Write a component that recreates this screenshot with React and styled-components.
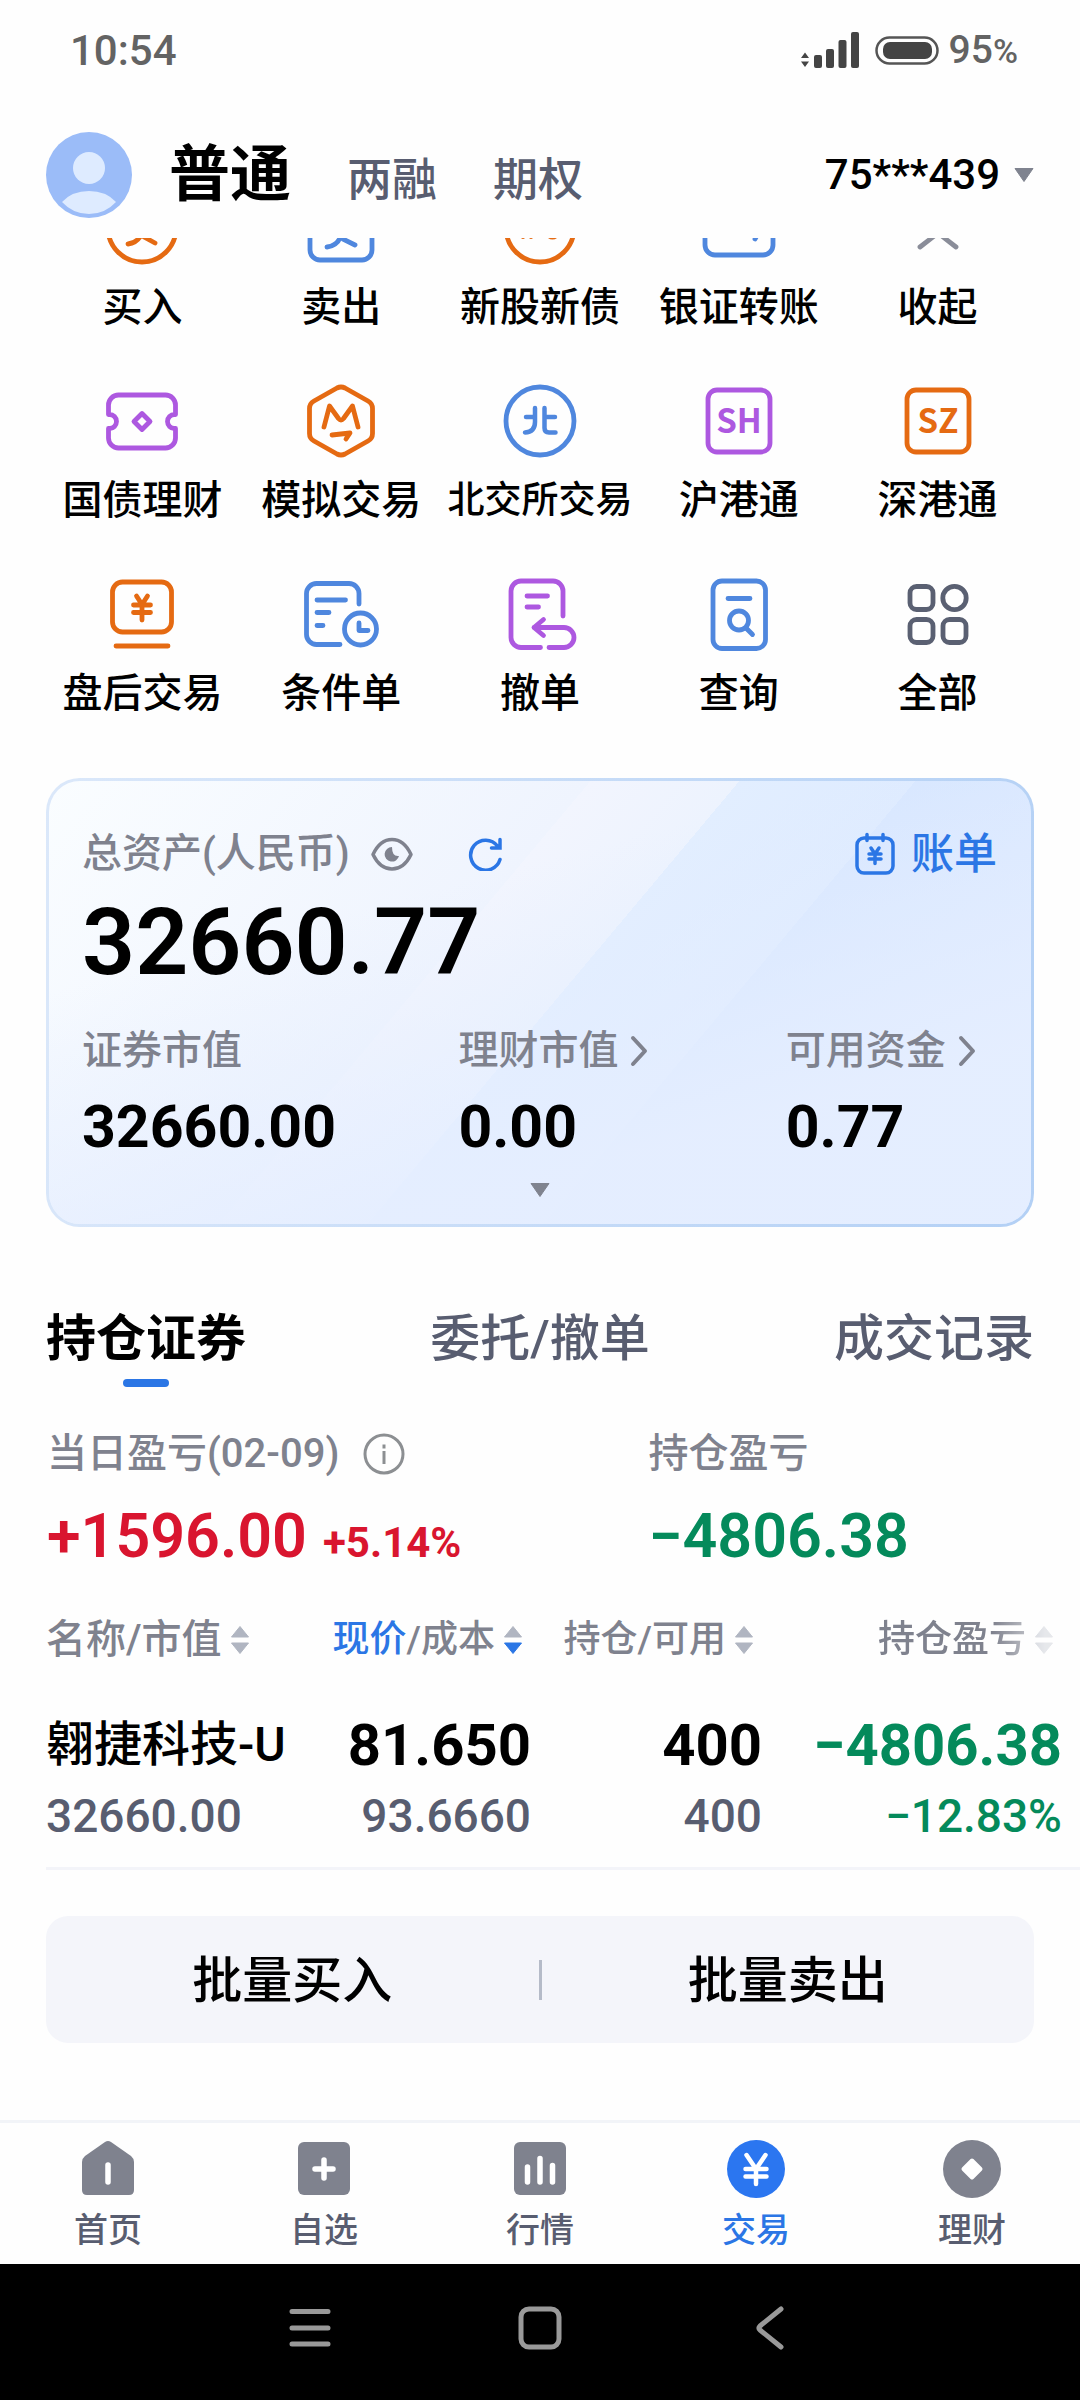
import styled, { createGlobalStyle } from "styled-components";

const colors = {
  ink: "#000",
  slate: "#585d70",
  muted: "#7f828e",
  blue: "#2b76e5",
  up: "#d9152f",
  down: "#048a5b",
  iconOrange: "#e56a12",
  iconBlue: "#4f87de",
  iconPurple: "#ad58e0",
};

const GlobalStyle = createGlobalStyle`
  * {
    box-sizing: border-box;
  }
  body {
    margin: 0;
    background: #fefefe;
    color: ${colors.ink};
    font-family: Roboto, "Noto Sans CJK SC", sans-serif;
    font-weight: 500;
  }
  button {
    margin: 0;
    padding: 0;
    border: 0;
    background: none;
    color: inherit;
    font: inherit;
    cursor: pointer;
  }
  a {
    color: inherit;
    text-decoration: none;
  }
  svg {
    display: block;
    flex-shrink: 0;
  }
`;

const Page = styled.div`
  display: flex;
  flex-direction: column;
  min-height: 100vh;
  white-space: nowrap;
`;

/* status bar */

const StatusBar = styled.div`
  display: flex;
  align-items: center;
  justify-content: space-between;
  height: 100px;
  padding: 0 62px 0 70px;
  color: #636363;
  font-size: 42px;
`;

const StatusRight = styled.div`
  display: flex;
  align-items: center;
`;

const BatteryText = styled.span`
  margin-left: 9px;
  font-size: 39px;
  line-height: 48px;
`;

const PercentSign = styled.span`
  font-size: 34px;
`;

/* account header */

const Header = styled.header`
  display: flex;
  align-items: center;
  padding: 32px 46px 20px;
`;

const AccountTabs = styled.nav`
  display: flex;
  align-items: baseline;
  flex: 1;
  gap: 56px;
  padding: 6px 0 0 37px;
`;

const AccountTab = styled.button`
  color: ${(props) => (props.$active ? colors.ink : colors.slate)};
  font-size: ${(props) => (props.$active ? 61 : 45)}px;
  font-weight: ${(props) => (props.$active ? 700 : 500)};
  line-height: 72px;
`;

const AccountSwitch = styled.button`
  display: flex;
  align-items: center;
  gap: 14px;
  font-size: 42px;
  line-height: 48px;
`;

/* shortcut grid, scrolled partly under the header */

const Scroller = styled.main`
  flex: 1;
  overflow: hidden;
`;

const Shortcuts = styled.div`
  display: grid;
  grid-template-columns: repeat(5, 1fr);
  row-gap: 43px;
  margin-top: -52px;
  padding: 0 43px;
`;

const Shortcut = styled.button`
  display: flex;
  flex-direction: column;
  align-items: center;
  gap: 10px;
  font-size: ${(props) => (props.$compact ? 37 : 40)}px;
  line-height: 56px;
`;

/* asset card */

const Card = styled.section`
  margin: 56px 46px 0;
  padding: 43px 34px 27px 33px;
  border: 3px solid transparent;
  border-radius: 34px;
  background: linear-gradient(345deg, rgba(229, 238, 255, 0.95) 25%, rgba(229, 238, 255, 0) 70%) padding-box,
    linear-gradient(
        130deg,
        #fafdff 0%,
        #eff4fe 40%,
        #f2f5fe 40%,
        #edf3fe 51%,
        #e2eeff 51%,
        #deebff 64%,
        #d8e7ff 64%,
        #deeaff 100%
      )
      padding-box,
    linear-gradient(100deg, #dbe8fa 0%, #b3d0f5 100%) border-box;
`;

const CardTop = styled.div`
  display: flex;
  align-items: center;
  height: 60px;
  color: ${colors.muted};
  font-size: 40px;
  line-height: 60px;
`;

const EyeButton = styled.button`
  margin: 0 55px 0 21px;
`;

const BillLink = styled.a`
  display: flex;
  align-items: center;
  gap: 16px;
  margin-left: auto;
  color: ${colors.blue};
  font-size: 43px;
  line-height: 60px;
`;

const TotalAmount = styled.div`
  margin: 11px 0 36px;
  font-size: 93px;
  font-weight: 600;
  line-height: 96px;
`;

const Balances = styled.div`
  display: grid;
  grid-template-columns: 376fr 327fr 211fr;
`;

const BalanceLabel = styled.div`
  display: flex;
  align-items: center;
  gap: 12px;
  color: ${colors.muted};
  font-size: 40px;
  line-height: 48px;
`;

const BalanceValue = styled.div`
  margin-top: 20px;
  font-size: 59px;
  font-weight: 700;
  line-height: 64px;
`;

const Expand = styled.button`
  display: block;
  margin: 24px auto 0;
`;

/* holdings */

const Tabs = styled.nav`
  display: flex;
  justify-content: space-between;
  padding: 80px 46px 0;
`;

const Tab = styled.button`
  display: flex;
  flex-direction: column;
  align-items: center;
  color: ${(props) => (props.$active ? colors.ink : colors.slate)};
  font-size: 50px;
  font-weight: ${(props) => (props.$active ? 700 : 500)};
  line-height: 64px;

  &::after {
    content: "";
    width: 46px;
    height: 8px;
    margin-top: 8px;
    border-radius: 4px;
    background: ${(props) => (props.$active ? colors.blue : "transparent")};
  }
`;

const Profits = styled.div`
  display: grid;
  grid-template-columns: 602fr 386fr;
  padding: 43px 46px 0 47px;
`;

const ProfitLabel = styled.div`
  display: flex;
  align-items: center;
  gap: 24px;
  color: ${colors.muted};
  font-size: 40px;
  line-height: 48px;
`;

const ProfitValue = styled.div`
  margin-top: 22px;
  color: ${(props) => (props.$up ? colors.up : colors.down)};
  font-size: 61px;
  font-weight: 600;
  line-height: 72px;
`;

const ProfitRate = styled.span`
  margin-left: 16px;
  font-size: 42px;
  font-weight: 700;
  line-height: 42px;
`;

const Holdings = styled.table`
  width: calc(100% - 46px);
  margin: 40px 0 0 46px;
  border-collapse: collapse;
  table-layout: fixed;
`;

const HeadCell = styled.th`
  width: ${(props) => props.$width || "auto"};
  padding: ${(props) => (props.$first ? "0" : "0 8px 0 0")};
  color: ${colors.muted};
  font-size: ${(props) => (props.$first ? 40 : 37)}px;
  font-weight: 500;
  line-height: 56px;
  text-align: ${(props) => (props.$first ? "left" : "right")};

  &:last-child {
    padding-right: 26px;
  }
`;

const SortButton = styled.button`
  display: inline-flex;
  align-items: center;
  gap: 8px;
  vertical-align: top;
  mask-image: ${(props) =>
    props.$fading ? "linear-gradient(to right, #000 65%, rgba(0, 0, 0, 0.3) 95%)" : "none"};
`;

const SortedBy = styled.span`
  color: ${colors.blue};
`;

const Cell = styled.td`
  padding: 45px 0 25px;
  border-bottom: 3px solid #f3f4f9;
  color: ${(props) => (props.$down ? colors.down : colors.ink)};
  text-align: ${(props) => (props.$first ? "left" : "right")};

  &:last-child {
    padding-right: 18px;
  }
`;

const CellMain = styled.div`
  font-size: ${(props) => (props.$name ? 48 : 58)}px;
  font-weight: ${(props) => (props.$name ? 500 : 700)};
  line-height: 64px;
`;

const CellSub = styled.div`
  margin-top: 13px;
  color: ${(props) => (props.$down ? colors.down : colors.slate)};
  font-size: 46px;
  line-height: 52px;
`;

const BatchActions = styled.div`
  display: flex;
  align-items: center;
  margin: 46px 46px 77px;
  border-radius: 22px;
  background: #f4f5fa;
`;

const BatchButton = styled.button`
  flex: 1;
  padding-top: 3px;
  font-size: 50px;
  line-height: 124px;
`;

const Divider = styled.span`
  width: 3px;
  height: 40px;
  background: #b5bbc8;
`;

/* bottom bars */

const BottomNav = styled.nav`
  display: grid;
  grid-template-columns: repeat(5, 1fr);
  padding: 16px 0 14px;
  border-top: 3px solid #f2f4f8;
`;

const NavItem = styled.a`
  display: flex;
  flex-direction: column;
  align-items: center;
  gap: 11px;
  color: ${(props) => (props.$active ? colors.blue : colors.slate)};
  font-size: 34px;
  line-height: 40px;
`;

const SystemBar = styled.div`
  display: flex;
  align-items: center;
  justify-content: center;
  gap: 186px;
  height: 136px;
  padding-bottom: 8px;
  background: #000;
`;

const SystemButton = styled.button`
  color: #999;
`;

const ShortcutIcon = ({ color, children }) => (
  <svg
    width="84"
    height="84"
    viewBox="0 0 84 84"
    fill="none"
    stroke={color}
    strokeWidth="4.800"
    strokeLinecap="round"
    strokeLinejoin="round"
    aria-hidden="true"
  >
    {children}
  </svg>
);

const MarketCode = ({ color, children }) => (
  <>
    <rect x="11" y="11" width="62" height="62" rx="9" />
    <text
      x="42"
      y="54"
      fill={color}
      stroke="none"
      fontFamily="Noto Sans CJK SC, sans-serif"
      fontSize="33"
      fontWeight="700"
      textAnchor="middle"
    >
      {children}
    </text>
  </>
);

const shortcuts = [
  {
    label: "买入",
    color: colors.iconOrange,
    icon: (
      <>
        <circle cx="42" cy="42" r="34" />
        <path d="M28 58q9-1 13-9M44 51l11 6" />
      </>
    ),
  },
  {
    label: "卖出",
    color: colors.iconBlue,
    icon: (
      <>
        <rect x="11" y="10" width="62" height="64" rx="10" />
        <path d="M28 61q10-1 14-11M44 53l12 6" />
      </>
    ),
  },
  {
    label: "新股新债",
    color: colors.iconOrange,
    icon: (
      <>
        <circle cx="42" cy="42" r="34" />
        <path d="M25 34v17M33 51V34h5a5 5 0 0 1 0 10h-5" strokeWidth="4" />
        <rect x="49" y="34" width="11" height="17.500" rx="5.500" strokeWidth="4" />
      </>
    ),
  },
  {
    label: "银证转账",
    color: colors.iconBlue,
    icon: (
      <>
        <rect x="8" y="14" width="68" height="55" rx="10" />
        <path d="M24 32h36M24 46h38l-4 7" />
      </>
    ),
  },
  { label: "收起", color: "#8a8d99", icon: <path d="M24 61l18-14 18 14" /> },
  {
    label: "国债理财",
    color: colors.iconPurple,
    icon: (
      <>
        <path d="M8.500 35.500V26a10 10 0 0 1 10-10h47a10 10 0 0 1 10 10v9.500h-1a7 7 0 0 0 0 14h1V59a10 10 0 0 1-10 10h-47a10 10 0 0 1-10-10v-9.500h1a7 7 0 0 0 0-14z" />
        <path d="M42 34.500l8 8-8 8-8-8z" />
      </>
    ),
  },
  {
    label: "模拟交易",
    color: colors.iconOrange,
    icon: (
      <>
        <path d="M38 9q4-2 8 0l23 13q4.500 2.500 4.500 7.500v25q0 5-4.500 7.500L46 75q-4 2-8 0L15 62q-4.500-2.500-4.500-7.500v-25q0-5 4.500-7.500z" />
        <path d="M25 48l5.500-21 9 12.500q2.500 3 5 0l9-12.500 5.500 21M33 56l18-2-4 6" />
      </>
    ),
  },
  {
    label: "北交所交易",
    color: colors.iconBlue,
    compact: true,
    icon: (
      <>
        <circle cx="42" cy="42" r="34" />
        <path d="M37 29v14q0 10-10 10.500M28 38h9M46.500 29v20q0 4.500 4.500 4.500h6.500M47 38h10" strokeWidth="4.500" />
      </>
    ),
  },
  {
    label: "沪港通",
    color: colors.iconPurple,
    icon: <MarketCode color={colors.iconPurple}>SH</MarketCode>,
  },
  {
    label: "深港通",
    color: colors.iconOrange,
    icon: <MarketCode color={colors.iconOrange}>SZ</MarketCode>,
  },
  {
    label: "盘后交易",
    color: colors.iconOrange,
    icon: (
      <>
        <rect x="12.500" y="10" width="59" height="50" rx="10" />
        <path d="M36.500 24l5.500 8.500 5.500-8.500M42 33v15M33.500 33h17M33.500 40.500h17M16 74h52" />
      </>
    ),
  },
  {
    label: "条件单",
    color: colors.iconBlue,
    icon: (
      <>
        <path d="M60 32V21.500a10 10 0 0 0-10-10H17.500a10 10 0 0 0-10 10v41a10 10 0 0 0 10 10H41M18 28h28.500M18 40.500h12M18 53.500h6" />
        <circle cx="61.500" cy="57" r="16" />
        <path d="M60 51v7.500h9" />
      </>
    ),
  },
  {
    label: "撤单",
    color: colors.iconPurple,
    icon: (
      <>
        <path d="M65 44V19a10 10 0 0 0-10-10H23a10 10 0 0 0-10 10v46.500a10 10 0 0 0 10 10h19.500M29 24h20.500M29 35h11.500" />
        <path d="M45.500 47.500l-9.500 8 9.500 8M36 55.500h30a10 10 0 0 1 0 20H51" />
      </>
    ),
  },
  {
    label: "查询",
    color: colors.iconBlue,
    icon: (
      <>
        <rect x="16" y="9" width="52.500" height="67.500" rx="9" />
        <path d="M31 26.500h22M49 56l6.500 6.500" />
        <circle cx="42" cy="48.500" r="9.500" />
      </>
    ),
  },
  {
    label: "全部",
    color: "#5a6072",
    icon: (
      <>
        <rect x="14" y="14.500" width="23" height="23" rx="6.500" />
        <circle cx="58.500" cy="26" r="11.700" />
        <rect x="14" y="47.500" width="23" height="23" rx="6.500" />
        <rect x="47" y="47.500" width="23" height="23" rx="6.500" />
      </>
    ),
  },
];

const navItems = [
  {
    label: "首页",
    icon: (
      <>
        <path d="M27 3q3-2 6 0l20 14q3 2.500 3 6v28q0 5-5 5H9q-5 0-5-5V23q0-3.500 3-6z" fill="#7f828e" stroke="none" />
        <path d="M30 26v17" />
      </>
    ),
  },
  {
    label: "自选",
    icon: (
      <>
        <rect x="4" y="3" width="52" height="53" rx="6" fill="#7f828e" stroke="none" />
        <path d="M30 21v18M21 30h18" />
      </>
    ),
  },
  {
    label: "行情",
    icon: (
      <>
        <rect x="4" y="3" width="52" height="53" rx="6" fill="#7f828e" stroke="none" />
        <path d="M17.500 28v15M30 19.500v23.500M42.500 26.500v16.500" />
      </>
    ),
  },
  {
    label: "交易",
    active: true,
    icon: (
      <>
        <circle cx="30" cy="30" r="29" fill="#2b76f0" stroke="none" />
        <path d="M20.500 16L30 30l9.500-14M30 30v15M19.500 30h21M19.500 37.500h21" strokeWidth="4.500" />
      </>
    ),
  },
  {
    label: "理财",
    icon: (
      <>
        <circle cx="30" cy="30" r="29" fill="#7f828e" stroke="none" />
        <path d="M30 21.500l8.500 8.500-8.500 8.500-8.500-8.500z" fill="#fff" strokeWidth="4" />
      </>
    ),
  },
];

const Chevron = () => (
  <svg width="18" height="32" viewBox="0 0 18 32" fill="none" stroke={colors.muted} strokeWidth="4" strokeLinecap="round" strokeLinejoin="round" aria-hidden="true">
    <path d="M3 3l12 13L3 29" />
  </svg>
);

const Caret = () => (
  <svg width="20" height="14" viewBox="0 0 20 14" aria-hidden="true">
    <path d="M1 .500h18L10 13.500z" fill="#7f838f" stroke="#7f838f" strokeLinejoin="round" />
  </svg>
);

const SortIcon = ({ descending }) => (
  <svg width="20" height="30" viewBox="0 0 20 30" strokeLinejoin="round" aria-hidden="true">
    <path d="M1.500 12L10 1.500l8.500 10.500z" fill="#b0b5c1" stroke="#b0b5c1" />
    <path d="M1.500 18L10 28.500l8.500-10.500z" fill={descending ? colors.blue : "#b0b5c1"} stroke={descending ? colors.blue : "#b0b5c1"} />
  </svg>
);

export default function App() {
  return (
    <Page>
      <GlobalStyle />
      <StatusBar>
        <span>10:54</span>
        <StatusRight>
          <svg width="140" height="40" viewBox="0 0 140 40" fill="#444" aria-hidden="true">
            <path d="M1 28l4-5.500 4 5.500zM1 31.500h8L5 37zM14 27a2 2 0 0 1 2-2h4a2 2 0 0 1 2 2v9a2 2 0 0 1-2 2h-4a2 2 0 0 1-2-2z" />
            <rect x="26" y="19" width="8" height="19" rx="2" />
            <rect x="38.500" y="10" width="8" height="28" rx="2" />
            <rect x="51" y="2" width="8" height="36" rx="2" />
            <rect x="76.500" y="7.500" width="61" height="26" rx="13" fill="none" stroke="#555" strokeWidth="2.500" />
            <rect x="83" y="12" width="49" height="17" rx="7" />
          </svg>
          <BatteryText>
            95<PercentSign>%</PercentSign>
          </BatteryText>
        </StatusRight>
      </StatusBar>

      <Header>
        <svg width="86" height="86" viewBox="0 0 86 86" role="img" aria-label="头像">
          <circle cx="43" cy="43" r="43" fill="#9bbcf8" />
          <circle cx="43" cy="36" r="16" fill="#deebff" />
          <path d="M16 70q10-11 27-11t27 11q-11 12-27 12T16 70z" fill="#deebff" />
        </svg>
        <AccountTabs>
          <AccountTab $active>普通</AccountTab>
          <AccountTab>两融</AccountTab>
          <AccountTab>期权</AccountTab>
        </AccountTabs>
        <AccountSwitch>
          75***439
          <Caret />
        </AccountSwitch>
      </Header>

      <Scroller>
        <Shortcuts>
          {shortcuts.map(({ label, color, icon, compact }) => (
            <Shortcut key={label} $compact={compact}>
              <ShortcutIcon color={color}>{icon}</ShortcutIcon>
              {label}
            </Shortcut>
          ))}
        </Shortcuts>

        <Card>
          <CardTop>
            总资产(人民币)
            <EyeButton aria-label="隐藏金额">
              <svg width="42" height="34" viewBox="0 0 42 34" fill="none" stroke={colors.muted} strokeWidth="3.500" strokeLinejoin="round">
                <path d="M2 17.500Q9 2.500 21 2.500t19 15Q33 32 21 32T2 17.500z" />
                <path d="M21 10a7.300 7.300 0 1 0 7 9q-7 1-7-9z" fill={colors.muted} stroke="none" />
              </svg>
            </EyeButton>
            <button aria-label="刷新">
              <svg width="34" height="34" viewBox="0 0 34 34" fill="none" stroke={colors.blue} strokeWidth="3.500" strokeLinecap="round">
                <path d="M32 22.500A15 15 0 1 1 29.500 9M32 2.500V11h-8.500" />
              </svg>
            </button>
            <BillLink href="#bill">
              <svg width="40" height="44" viewBox="0 0 40 44" fill="none" stroke={colors.blue} strokeWidth="3.500" strokeLinecap="round" strokeLinejoin="round" aria-hidden="true">
                <rect x="2" y="6" width="36" height="35" rx="7" />
                <path d="M12 2.500v6M28 2.500v6M16 16l4 6 4-6M20 22v9.500M14 22h12M14 27h12" />
              </svg>
              账单
            </BillLink>
          </CardTop>
          <TotalAmount>32660.77</TotalAmount>
          <Balances>
            <div>
              <BalanceLabel>证券市值</BalanceLabel>
              <BalanceValue>32660.00</BalanceValue>
            </div>
            <div>
              <BalanceLabel>
                理财市值
                <Chevron />
              </BalanceLabel>
              <BalanceValue>0.00</BalanceValue>
            </div>
            <div>
              <BalanceLabel>
                可用资金
                <Chevron />
              </BalanceLabel>
              <BalanceValue>0.77</BalanceValue>
            </div>
          </Balances>
          <Expand aria-label="展开">
            <Caret />
          </Expand>
        </Card>

        <Tabs>
          <Tab $active>持仓证券</Tab>
          <Tab>委托/撤单</Tab>
          <Tab>成交记录</Tab>
        </Tabs>

        <Profits>
          <div>
            <ProfitLabel>
              当日盈亏(02-09)
              <svg width="42" height="42" viewBox="0 0 42 42" fill="none" stroke="#8c8f92" strokeWidth="3" aria-hidden="true">
                <circle cx="21" cy="21" r="19" />
                <path d="M21 18v13M21 11.500v4" />
              </svg>
            </ProfitLabel>
            <ProfitValue $up>
              +1596.00<ProfitRate>+5.14%</ProfitRate>
            </ProfitValue>
          </div>
          <div>
            <ProfitLabel>持仓盈亏</ProfitLabel>
            <ProfitValue>−4806.38</ProfitValue>
          </div>
        </Profits>

        <Holdings>
          <thead>
            <tr>
              <HeadCell $first $width="254px">
                <SortButton>
                  名称/市值
                  <SortIcon />
                </SortButton>
              </HeadCell>
              <HeadCell $width="231px">
                <SortButton>
                  <span>
                    <SortedBy>现价</SortedBy>/成本
                  </span>
                  <SortIcon descending />
                </SortButton>
              </HeadCell>
              <HeadCell $width="231px">
                <SortButton>
                  持仓/可用
                  <SortIcon />
                </SortButton>
              </HeadCell>
              <HeadCell>
                <SortButton $fading>
                  持仓盈亏
                  <SortIcon />
                </SortButton>
              </HeadCell>
            </tr>
          </thead>
          <tbody>
            <tr>
              <Cell $first>
                <CellMain $name>翱捷科技-U</CellMain>
                <CellSub>32660.00</CellSub>
              </Cell>
              <Cell>
                <CellMain>81.650</CellMain>
                <CellSub>93.6660</CellSub>
              </Cell>
              <Cell>
                <CellMain>400</CellMain>
                <CellSub>400</CellSub>
              </Cell>
              <Cell $down>
                <CellMain>−4806.38</CellMain>
                <CellSub $down>−12.83%</CellSub>
              </Cell>
            </tr>
          </tbody>
        </Holdings>

        <BatchActions>
          <BatchButton>批量买入</BatchButton>
          <Divider />
          <BatchButton>批量卖出</BatchButton>
        </BatchActions>
      </Scroller>

      <BottomNav>
        {navItems.map(({ label, icon, active }) => (
          <NavItem key={label} href={`#${label}`} $active={active}>
            <svg width="60" height="60" viewBox="0 0 60 60" fill="none" stroke="#fff" strokeWidth="5.500" strokeLinecap="round" strokeLinejoin="round" aria-hidden="true">
              {icon}
            </svg>
            {label}
          </NavItem>
        ))}
      </BottomNav>

      <SystemBar>
        <SystemButton aria-label="最近任务">
          <svg width="44" height="44" viewBox="0 0 44 44" stroke="currentColor" strokeWidth="5" strokeLinecap="round">
            <path d="M4 5.500h36M4 22h36M4 38h36" />
          </svg>
        </SystemButton>
        <SystemButton aria-label="主屏幕">
          <svg width="44" height="44" viewBox="0 0 44 44" fill="none" stroke="currentColor" strokeWidth="5">
            <rect x="3" y="3" width="38" height="38" rx="8" />
          </svg>
        </SystemButton>
        <SystemButton aria-label="返回">
          <svg width="44" height="44" viewBox="0 0 44 44" fill="none" stroke="currentColor" strokeWidth="5" strokeLinecap="round" strokeLinejoin="round">
            <path d="M33 3L12 20q-2 2 0 4l21 17" />
          </svg>
        </SystemButton>
      </SystemBar>
    </Page>
  );
}
